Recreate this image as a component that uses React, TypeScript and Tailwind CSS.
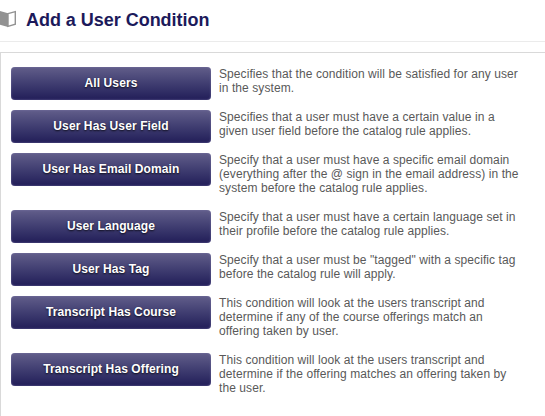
import React from "react";

const conditions = [
    {
        label: "All Users",
        lines: ["Specifies that the condition will be satisfied for any user", "in the system."],
    },
    {
        label: "User Has User Field",
        lines: ["Specifies that a user must have a certain value in a", "given user field before the catalog rule applies."],
    },
    {
        label: "User Has Email Domain",
        lines: [
            "Specify that a user must have a specific email domain",
            "(everything after the @ sign in the email address) in the",
            "system before the catalog rule applies.",
        ],
    },
    {
        label: "User Language",
        lines: ["Specify that a user must have a certain language set in", "their profile before the catalog rule applies."],
    },
    {
        label: "User Has Tag",
        lines: ["Specify that a user must be \"tagged\" with a specific tag", "before the catalog rule will apply."],
    },
    {
        label: "Transcript Has Course",
        lines: [
            "This condition will look at the users transcript and",
            "determine if any of the course offerings match an",
            "offering taken by user.",
        ],
    },
    {
        label: "Transcript Has Offering",
        lines: [
            "This condition will look at the users transcript and",
            "determine if the offering matches an offering taken by",
            "the user.",
        ],
    },
];

const BookIcon = () => (
    <svg width="16" height="18" viewBox="0 0 16 18" className="shrink-0">
        <path d="M0 1 L8 3.2 V17 L0 14.8 Z" fill="#929292" />
        <path d="M8 3.6 L15.3 1.6 V14.2 L8 16.3 Z" fill="#fff" stroke="#929292" strokeWidth="1.4" />
    </svg>
);

const App = () => {
    return (
        <div className="h-screen overflow-hidden bg-white font-['Liberation_Sans',Arial,sans-serif]">
            <header className="flex h-[42px] items-start border-b border-[#ebebeb] pt-[10px]">
                <BookIcon />
                <h1 className="ml-[10px] text-[18px] leading-[20px] font-bold tracking-[-0.03px] whitespace-nowrap text-[#1c1a5b]">
                    Add a User Condition
                </h1>
            </header>

            <main className="mt-[10px] h-[380px] border-t border-l border-[#d9d9d9] pt-[14px] pl-[10px]">
                {conditions.map((condition) => (
                    <div key={condition.label} className="flex items-start gap-2">
                        <button className="h-[33px] w-[200px] shrink-0 rounded-[4px] bg-linear-to-b from-[#625e8a] to-[#221d58] pb-px text-[12px] font-bold tracking-[0.1px] text-white inset-shadow-[0_0_2px_#7b77a8] text-shadow-[0_1px_2px_rgb(0_0_0/0.8)]">
                            {condition.label}
                        </button>
                        <p className="pb-[15px] text-[12px] leading-[14px] tracking-[0.08px] whitespace-nowrap text-[#595959]">
                            {condition.lines.map((line) => (
                                <span key={line} className="block">{line}</span>
                            ))}
                        </p>
                    </div>
                ))}
            </main>
        </div>
    );
};

export default App;
